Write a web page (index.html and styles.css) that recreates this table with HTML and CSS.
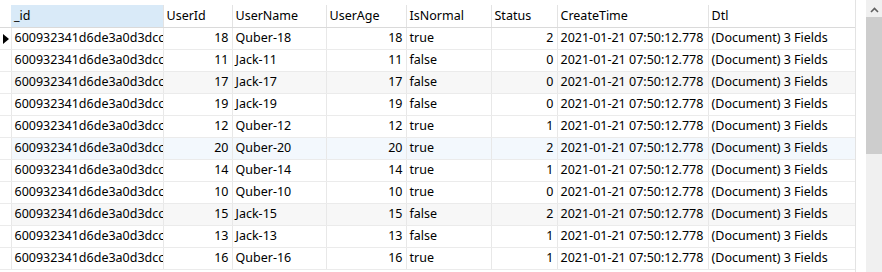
FILE: index.html
```html
<!DOCTYPE html>
<html lang="en">

<head>
    <meta charset="UTF-8">
    <title>Users</title>
    <link rel="stylesheet" href="styles.css">
</head>

<body>
    <main class="view">
        <!-- data grid -->
        <div class="gridArea">
            <table class="grid">
                <colgroup>
                    <col class="colMark">
                    <col class="colId">
                    <col class="colUserId">
                    <col class="colUserName">
                    <col class="colUserAge">
                    <col class="colIsNormal">
                    <col class="colStatus">
                    <col class="colCreateTime">
                    <col class="colDtl">
                </colgroup>
                <thead>
                    <tr>
                        <th class="mark"></th>
                        <th class="selectedCol">_id</th>
                        <th>UserId</th>
                        <th>UserName</th>
                        <th>UserAge</th>
                        <th>IsNormal</th>
                        <th>Status</th>
                        <th>CreateTime</th>
                        <th>Dtl</th>
                    </tr>
                </thead>
                <tbody id="gridBody"></tbody>
            </table>
        </div>

        <!-- vertical scrollbar -->
        <div class="scrollBar">
            <div class="scrollUp">
                <svg width="9" height="6" viewBox="0 0 9 6">
                    <path d="M1 5 L4.5 1.5 L8 5" fill="none" stroke="#606060" stroke-width="1.6" />
                </svg>
            </div>
            <div class="scrollThumb"></div>
        </div>
    </main>

    <script>
        /* row data */
        const rows = [
            [18, 'Quber-18', 18, 'true', 2],
            [11, 'Jack-11', 11, 'false', 0],
            [17, 'Jack-17', 17, 'false', 0],
            [19, 'Jack-19', 19, 'false', 0],
            [12, 'Quber-12', 12, 'true', 1],
            [20, 'Quber-20', 20, 'true', 2],
            [14, 'Quber-14', 14, 'true', 1],
            [10, 'Quber-10', 10, 'true', 0],
            [15, 'Jack-15', 15, 'false', 2],
            [13, 'Jack-13', 13, 'false', 1],
            [16, 'Quber-16', 16, 'true', 1]
        ];

        const body = document.getElementById('gridBody');
        rows.forEach(function (r, i) {
            let tr = document.createElement('tr');
            if (i == 2 || i == 8) {
                tr.classList.add('shaded');
            } else if (i == 5) {
                tr.classList.add('hovered');
            }
            let cells = [
                ['mark', ''],
                ['', '600932341d6de3a0d3dcc'],
                ['num', r[0]],
                ['', r[1]],
                ['num', r[2]],
                ['', r[3]],
                ['num', r[4]],
                ['', '2021-01-21 07:50:12.778'],
                ['', '(Document) 3 Fields']
            ];
            cells.forEach(function (c) {
                let td = document.createElement('td');
                if (c[0]) td.classList.add(c[0]);
                td.textContent = c[1];
                tr.appendChild(td);
            });
            if (i == 0) {
                let arrow = document.createElement('span');
                arrow.classList.add('current');
                tr.firstChild.appendChild(arrow);
            }
            body.appendChild(tr);
        });
    </script>
</body>

</html>
```

FILE: styles.css
```css
/* reset */
body,
table,
th,
td,
div {
    margin: 0;
    padding: 0;
    box-sizing: border-box;
}

html,
body {
    height: 100%;
    background-color: #FFFFFF;
}

body {
    font-family: 'Noto Sans', 'Noto Sans CJK SC', sans-serif;
    font-size: 12.5px;
    color: #000000;
}

/* layout */
.view {
    display: flex;
    height: 100%;
}

.gridArea {
    width: 856px;
    padding-top: 5px;
    border-right: 1px solid #E3E3E3;
}

.scrollBar {
    display: flex;
    flex-direction: column;
    width: 16px;
    margin-left: 10px;
    background-color: #F0F0F0;
}

.scrollUp {
    display: flex;
    align-items: center;
    justify-content: center;
    height: 17px;
    padding-top: 3px;
}

.scrollThumb {
    height: 137px;
    background-color: #CDCDCD;
}

/* grid */
.grid {
    width: 855px;
    table-layout: fixed;
    border-collapse: collapse;
}

.colMark { width: 11px; }
.colId { width: 152px; }
.colUserId { width: 69px; }
.colUserName { width: 94px; }
.colUserAge { width: 80px; }
.colIsNormal { width: 85px; }
.colStatus { width: 66px; }
.colCreateTime { width: 151px; }
.colDtl { width: 147px; }

.grid th,
.grid td {
    overflow: hidden;
    white-space: nowrap;
    text-overflow: clip;
    text-align: left;
    font-weight: 400;
    line-height: 16px;
    padding: 0 3px 0 3px;
    border-right: 1px solid #E8E8E8;
    border-bottom: 1px solid #EBEBEB;
}

.grid th:last-child,
.grid td:last-child {
    border-right: none;
}

.grid th {
    height: 22px;
    padding-top: 1px;
    border-right-color: #E3E3E3;
    border-bottom: 1px solid #DADADA;
}

.grid th.mark {
    border-right: none;
}

.grid th.selectedCol {
    background-color: #D9EAF8;
}

.grid td {
    height: 22px;
}

.grid td.num {
    text-align: right;
}

.grid td.mark {
    position: relative;
    padding: 0;
    background-color: #FFFFFF;
}

.grid tr.shaded td {
    background-color: #F7F7F7;
}

.grid tr.hovered td {
    background-color: #F3F8FD;
}

.grid tr.shaded td.mark,
.grid tr.hovered td.mark {
    background-color: #FFFFFF;
}

/* current row marker */
.current {
    position: absolute;
    top: 6px;
    left: 3px;
    width: 0;
    height: 0;
    border-top: 5px solid transparent;
    border-bottom: 5px solid transparent;
    border-left: 6px solid #000000;
}
```
